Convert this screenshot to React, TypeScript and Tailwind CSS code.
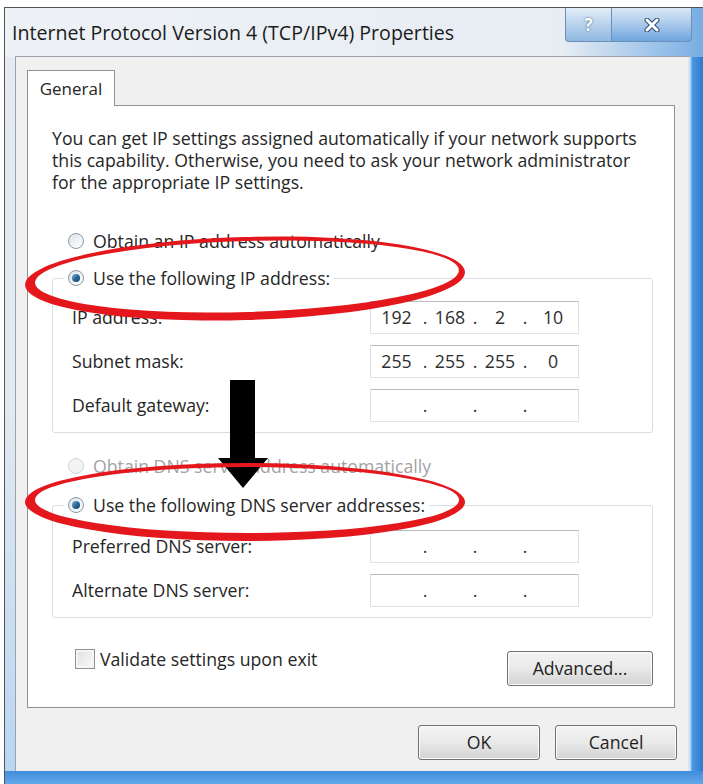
import clsx from 'clsx';

type Parts = [string, string, string, string];

function ellipseRing(cx: number, cy: number, rx: number, ry: number) {
  return `M${cx - rx} ${cy} a${rx} ${ry} 0 1 0 ${rx * 2} 0 a${rx} ${ry} 0 1 0 ${-rx * 2} 0 Z`;
}

function Radio({ checked, disabled }: { checked?: boolean; disabled?: boolean }) {
  return (
    <span
      className={clsx(
        'flex h-[16px] w-[16px] shrink-0 items-center justify-center rounded-full border',
        disabled
          ? 'border-[#cfd3d6] bg-[#f4f4f4]'
          : 'border-[#8797a6] bg-linear-to-br from-[#dde3e9] to-[#ffffff]',
      )}
    >
      {checked && (
        <span className="h-[8px] w-[8px] rounded-full bg-linear-to-br from-[#7fb0d6] via-[#2c6a98] to-[#163f63]" />
      )}
    </span>
  );
}

function IpField({ parts }: { parts?: Parts }) {
  const p = parts ?? ['', '', '', ''];
  return (
    <div className="flex h-[33px] w-[209px] items-center border border-[#dde2e7] border-t-[#b7bcc3] bg-white text-[#2e2e2e]">
      <span className="w-[51px] text-center">{p[0]}</span>
      <span className="w-[6px] text-center">.</span>
      <span className="w-[44px] text-center">{p[1]}</span>
      <span className="w-[6px] text-center">.</span>
      <span className="w-[44px] text-center">{p[2]}</span>
      <span className="w-[6px] text-center">.</span>
      <span className="flex-1 text-center">{p[3]}</span>
    </div>
  );
}

function FieldRow({ label, parts }: { label: string; parts?: Parts }) {
  return (
    <div className="flex items-center justify-between pl-[8px]">
      <span>{label}</span>
      <IpField parts={parts} />
    </div>
  );
}

function WinButton({ children, className }: { children: React.ReactNode; className?: string }) {
  return (
    <button
      className={clsx(
        'h-[35px] rounded-[3px] border border-[#707070] bg-linear-to-b from-[#f3f3f3] via-[#e9e9e9] to-[#d3d3d3] text-[#1f1f1f] shadow-[inset_0_0_0_1px_#fbfbfb]',
        className,
      )}
    >
      {children}
    </button>
  );
}

export default function App() {
  return (
    <div className="relative h-[784px] w-[703px] overflow-hidden bg-white font-['Open_Sans','Noto_Sans',sans-serif] text-[17.7px] text-[#262626]">
      <div className="ml-[4px] mt-[7px] flex flex-col border-l border-t border-[#505458] bg-[#e6ecf2]">
        {/* title bar */}
        <div className="flex h-[49px] bg-linear-to-r from-[#eef2f6] via-[#e7edf3] via-80% to-[#76ade3]">
          <div className="pl-[7px] pt-[12px] text-[19.6px] leading-[26px] text-[#1b1b1b]">
            Internet Protocol Version 4 (TCP/IPv4) Properties
          </div>
          <div className="ml-auto mr-[11px] flex h-[34px]">
            <div className="flex w-[47px] items-center justify-center rounded-bl-[4px] border border-t-0 border-[#6d8fb3] bg-linear-to-b from-[#e3edf7] via-[#b9d2ec] to-[#8fb8e2] text-[17px] font-bold text-white [text-shadow:0_0_2px_#2a4c70]">
              ?
            </div>
            <div className="flex w-[80px] items-center justify-center rounded-br-[4px] border border-l-0 border-t-0 border-[#6d8fb3] bg-linear-to-b from-[#dbe8f5] via-[#a8c8ea] to-[#6fa6df]">
              <svg width="16" height="14" viewBox="0 0 16 14">
                <path d="M3 2 L13 12 M13 2 L3 12" stroke="#2a4c70" strokeWidth="5" strokeLinecap="round" />
                <path d="M3 2 L13 12 M13 2 L3 12" stroke="#ffffff" strokeWidth="3" strokeLinecap="round" />
              </svg>
            </div>
          </div>
        </div>

        <div className="flex">
          {/* left frame */}
          <div className="w-[11px] bg-linear-to-b from-[#e4eaf0] via-[#e2e9f0] to-[#b9d6f2]" />

          {/* client area */}
          <div className="flex w-[672px] flex-col bg-[#f0f0f0] pb-[11px] pl-[11px] pt-[13px] shadow-[0_0_0_1px_#9aa2ab]">
            <div className="relative z-10 -mb-px flex h-[36px] w-[88px] items-start justify-center border border-b-0 border-[#8d9198] bg-white pt-[5px] text-[17px]">
              General
            </div>
            <div className="w-[648px] border border-[#8d9198] bg-white pb-[21px] pl-[24px] pr-[21px] pt-[21px]">
              <p className="leading-[22px]">
                You can get IP settings assigned automatically if your network supports
                <br />
                this capability. Otherwise, you need to ask your network administrator
                <br />
                for the appropriate IP settings.
              </p>

              <div className="mt-[37px] flex h-[22px] items-center gap-[9px] pl-[16px]">
                <Radio />
                <span>Obtain an IP address automatically</span>
              </div>

              <fieldset className="mt-[15px] rounded-[3px] border border-[#d9dee2] pb-[10px] pl-[11px] pr-[73px] pt-[12px]">
                <legend className="flex h-[22px] items-center gap-[9px] px-[4px]">
                  <Radio checked />
                  <span>Use the following IP address:</span>
                </legend>
                <div className="flex flex-col gap-[11px]">
                  <FieldRow label="IP address:" parts={['192', '168', '2', '10']} />
                  <FieldRow label="Subnet mask:" parts={['255', '255', '255', '0']} />
                  <FieldRow label="Default gateway:" />
                </div>
              </fieldset>

              <div className="mt-[22px] flex h-[22px] items-center gap-[9px] pl-[16px] text-[#a3a3a3]">
                <Radio disabled />
                <span>Obtain DNS server address automatically</span>
              </div>

              <fieldset className="mt-[17px] rounded-[3px] border border-[#d9dee2] pb-[10px] pl-[11px] pr-[73px] pt-[14px]">
                <legend className="flex h-[22px] items-center gap-[9px] px-[4px]">
                  <Radio checked />
                  <span>Use the following DNS server addresses:</span>
                </legend>
                <div className="flex flex-col gap-[11px]">
                  <FieldRow label="Preferred DNS server:" />
                  <FieldRow label="Alternate DNS server:" />
                </div>
              </fieldset>

              <div className="mt-[30px] flex items-start justify-between">
                <div className="ml-[23px] flex h-[22px] items-center gap-[5px]">
                  <span className="h-[20px] w-[20px] border border-[#8e9194] bg-linear-to-br from-[#dcdfe2] to-[#fbfbfb] shadow-[inset_0_0_0_2px_#f5f5f5]" />
                  <span>Validate settings upon exit</span>
                </div>
                <WinButton className="mt-[3px] w-[146px]">Advanced...</WinButton>
              </div>
            </div>

            <div className="mt-[17px] flex justify-end gap-[15px] pr-[11px]">
              <WinButton className="w-[122px]">OK</WinButton>
              <WinButton className="w-[122px]">Cancel</WinButton>
            </div>
          </div>

          {/* right frame */}
          <div className="flex-1 bg-linear-to-r from-[#d6e6f6] from-10% via-[#4b97e2] via-30% to-[#2c7ccc]" />
        </div>

        {/* bottom frame */}
        <div className="h-[13px] bg-linear-to-b from-[#3f8ddc] to-[#62a7e9]" />
      </div>

      {/* annotations */}
      <svg
        className="pointer-events-none absolute left-0 top-0"
        width="703"
        height="784"
        viewBox="0 0 703 784"
      >
        <path d="M230 380 H255 V458 H268 L243 488 L218 458 H230 Z" fill="#000000" />
        <g transform="rotate(-1.7 245 278)">
          <path
            d={ellipseRing(245, 278.5, 220, 41.5) + ' ' + ellipseRing(247, 276.5, 212, 35.5)}
            fill="#e3171c"
            fillRule="evenodd"
          />
        </g>
        <path
          d={ellipseRing(245, 502, 220, 39) + ' ' + ellipseRing(247, 500, 212, 33)}
          fill="#e3171c"
          fillRule="evenodd"
        />
      </svg>
    </div>
  );
}
